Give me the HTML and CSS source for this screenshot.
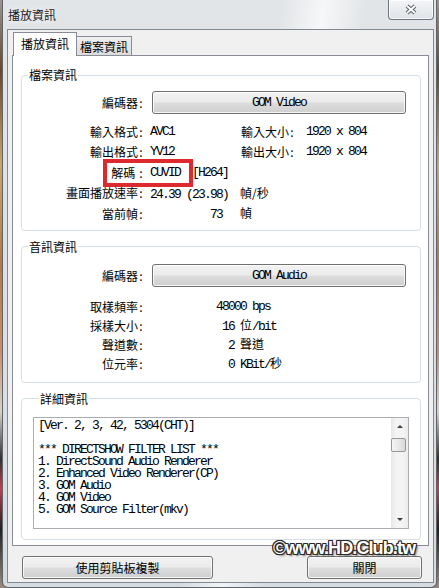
FILE: index.html
```html
<!DOCTYPE html>
<html lang="zh-Hant">
<head>
  <meta charset="UTF-8" />
  <title>播放資訊</title>
  <link rel="stylesheet" href="styles.css">
</head>
<body>
  <div class="window">
    <div class="titlebar">
      <span class="title">播放資訊</span>
      <div class="close-box">
        <svg width="14" height="11" viewBox="0 0 14 11">
          <path d="M3 2 L11 9 M11 2 L3 9" stroke="#5a5f66" stroke-width="4" fill="none"/>
          <path d="M3 2 L11 9 M11 2 L3 9" stroke="#ffffff" stroke-width="2" fill="none"/>
        </svg>
      </div>
    </div>

    <div class="client">
      <div class="tabs">
        <div class="tab active">播放資訊</div>
        <div class="tab">檔案資訊</div>
      </div>

      <div class="panel">
        <fieldset class="group video">
          <legend>檔案資訊</legend>
          <div class="codec-row">
            <span class="label">編碼器<span class="c">:</span></span>
            <button class="btn codec mono">GOM Video</button>
          </div>
          <div class="info">
            <span class="label">輸入格式<span class="c">:</span></span>
            <span class="val mono">AVC1</span>
            <span class="label2">輸入大小<span class="c">:</span></span>
            <span class="val2 mono">1920 x 804</span>

            <span class="label">輸出格式<span class="c">:</span></span>
            <span class="val mono">YV12</span>
            <span class="label2">輸出大小<span class="c">:</span></span>
            <span class="val2 mono">1920 x 804</span>

            <span class="label">解碼 <span class="c">:</span></span>
            <span class="val mono span3">CUVID  [H264]</span>

            <span class="label">畫面播放速率<span class="c">:</span></span>
            <span class="val mono span3">24.39 (23.98)  <span class="cjk">幀/秒</span></span>

            <span class="label">當前幀<span class="c">:</span></span>
            <span class="val mono span3">          73   <span class="cjk">幀</span></span>

            <div class="mark"></div>
          </div>
        </fieldset>

        <fieldset class="group audio">
          <legend>音訊資訊</legend>
          <div class="codec-row">
            <span class="label">編碼器<span class="c">:</span></span>
            <button class="btn codec mono">GOM Audio</button>
          </div>
          <div class="info info-audio">
            <span class="label">取樣頻率<span class="c">:</span></span>
            <span class="val mono">           48000 bps</span>

            <span class="label">採樣大小<span class="c">:</span></span>
            <span class="val mono">            16 <span class="cjk">位</span>/bit</span>

            <span class="label">聲道數<span class="c">:</span></span>
            <span class="val mono">             2 <span class="cjk">聲道</span></span>

            <span class="label">位元率<span class="c">:</span></span>
            <span class="val mono">             0 KBit/<span class="cjk">秒</span></span>
          </div>
        </fieldset>

        <fieldset class="group detail-group">
          <legend>詳細資訊</legend>
          <div class="detail">
<pre class="mono">[Ver. 2, 3, 42, 5304(CHT)]

*** DIRECTSHOW FILTER LIST ***
1. DirectSound Audio Renderer
2. Enhanced Video Renderer(CP)
3. GOM Audio
4. GOM Video
5. GOM Source Filter(mkv)</pre>
            <div class="sb">
              <div class="sb-btn"><span class="arrow up"></span></div>
              <div class="sb-track"><div class="thumb"></div></div>
              <div class="sb-btn"><span class="arrow down"></span></div>
            </div>
          </div>
        </fieldset>
      </div>

      <div class="footer">
        <button class="btn copy">使用剪貼板複製</button>
        <button class="btn close">關閉</button>
      </div>
    </div>
  </div>

  <div class="watermark">©www.HD.Club.tw</div>
</body>
</html>
```

FILE: styles.css
```css
body {
  margin: 0;
  width: 439px;
  height: 588px;
  overflow: hidden;
  font-family: "Noto Sans CJK TC", sans-serif;
  font-size: 12px;
  color: #000;
  background: linear-gradient(to bottom, #9a948e 0%, #6b4528 12%, #c9a66b 28%, #b07a48 45%, #c8906a 60%, #d8d0c8 70%, #303030 78%, #c04050 83%, #202020 90%, #9a8a80 100%);
}
.window {
  margin-left: 2px;
  width: 435px;
  height: 588px;
  box-sizing: border-box;
  display: flex;
  flex-direction: column;
  padding: 0 2px 4px 4px;
  border: 1px solid #5d646c;
  border-top: 0;
  border-radius: 0 0 6px 6px;
  background:
    linear-gradient(100deg, rgba(255,255,255,0) 52%, rgba(255,255,255,0.7) 60%, rgba(255,255,255,0) 68%),
    linear-gradient(to bottom, #e2e5e8, #d6dbe0);
}
.titlebar {
  height: 29px;
  display: flex;
  align-items: flex-start;
}
.title {
  margin: 6px 0 0 1px;
  line-height: 17px;
  color: #1a1a1a;
  text-shadow: 0 0 6px #fff;
}
.close-box {
  margin-left: auto;
  width: 46px;
  height: 20px;
  box-sizing: border-box;
  border: 1px solid #6d757e;
  border-top: 0;
  border-radius: 0 0 4px 4px;
  background: linear-gradient(to bottom, #f3f5f7, #dfe3e7);
  box-shadow: inset 0 0 0 1px rgba(255,255,255,0.7);
  display: flex;
  align-items: center;
  justify-content: center;
}
.client {
  flex: 1;
  display: flex;
  flex-direction: column;
  border: 1px solid #7f8a95;
  background: #f0f0f0;
}
.tabs {
  display: flex;
  align-items: flex-end;
  padding: 2px 0 0 5px;
}
.tab {
  box-sizing: border-box;
  border: 1px solid #898c95;
  border-bottom: 0;
  text-align: center;
}
.tab.active {
  position: relative;
  z-index: 1;
  width: 64px;
  height: 24px;
  line-height: 22px;
  margin-bottom: -1px;
  background: #fff;
}
.tab:not(.active) {
  width: 55px;
  height: 19px;
  line-height: 19px;
  border-left: 0;
  background: linear-gradient(to bottom, #f0f0f0, #dcdcdc);
}
.panel {
  flex: 1;
  margin: 0 4px;
  padding-top: 12px;
  border: 1px solid #898c95;
  background: #fff;
}
.group {
  margin: 0 7px 0 8px;
  padding: 9px 14px 6px 0;
  border: 1px solid #d5dfe5;
  border-radius: 4px;
  min-width: 0;
}
.group legend {
  margin-left: 6px;
  padding: 0 1px;
  line-height: 14px;
}
.audio {
  margin-top: 9px;
  padding-top: 10px;
  padding-bottom: 9px;
}
.detail-group {
  margin-top: 9px;
  padding: 11px 11px 10px 11px;
}
.mono {
  font-family: "Liberation Mono", "Noto Sans CJK TC", monospace;
  font-size: 13px;
  letter-spacing: -1.8px;
}
.cjk {
  font-family: "Noto Sans CJK TC", sans-serif;
  font-size: 12px;
  letter-spacing: 0;
}
.c {
  display: inline-block;
  width: 6px;
  text-align: center;
}
.codec-row {
  display: flex;
  align-items: center;
}
.codec-row .label {
  width: 122px;
  text-align: right;
}
.btn {
  height: 23px;
  box-sizing: border-box;
  padding: 0;
  border: 1px solid #707070;
  border-radius: 3px;
  background: linear-gradient(to bottom, #f2f2f2 0%, #ebebeb 48%, #dddddd 52%, #cfcfcf 100%);
  box-shadow: inset 0 0 0 1px rgba(255,255,255,0.8);
  font-size: 12px;
  color: #000;
}
.btn.mono {
  font-size: 13px;
}
.btn:not(.mono) {
  font-family: "Noto Sans CJK TC", sans-serif;
}
.codec {
  margin-left: 8px;
  width: 254px;
}
.info {
  position: relative;
  display: grid;
  grid-template-columns: 122px 96px 62px 1fr;
  grid-auto-rows: 20.5px;
  align-items: center;
  margin-top: 7px;
}
.info-audio {
  grid-template-columns: 122px 1fr;
  grid-auto-rows: 19px;
  margin-top: 10px;
}
.info .label {
  text-align: right;
}
.val {
  padding-left: 6px;
  white-space: pre;
}
.label2 {
  padding-left: 1px;
}
.val2 {
  padding-left: 4px;
  white-space: pre;
}
.span3 {
  grid-column: span 3;
}
.mark {
  position: absolute;
  left: 81px;
  top: 38px;
  width: 90px;
  height: 28px;
  box-sizing: border-box;
  border: 4px solid #dc2a2f;
}
.detail {
  display: flex;
  height: 112px;
  box-sizing: border-box;
  border: 1px solid #abadb3;
  background: #fff;
}
.detail pre {
  flex: 1;
  margin: 0;
  padding: 2px 4px 0;
  line-height: 12px;
}
.sb {
  width: 17px;
  display: flex;
  flex-direction: column;
  background: linear-gradient(to right, #e7e7e7, #f4f4f4 30%, #f4f4f4 70%, #ebebeb);
}
.sb-btn {
  height: 17px;
  display: flex;
  align-items: center;
  justify-content: center;
}
.arrow {
  width: 0;
  height: 0;
  border-left: 3px solid transparent;
  border-right: 3px solid transparent;
}
.arrow.up {
  border-bottom: 3px solid #3c3c3c;
}
.arrow.down {
  border-top: 3px solid #3c3c3c;
}
.sb-track {
  flex: 1;
  padding-top: 3px;
}
.thumb {
  height: 14px;
  margin: 0 2px 0 0;
  box-sizing: border-box;
  border: 1px solid #979797;
  border-radius: 2px;
  background: linear-gradient(to right, #f4f4f4, #e8e8e8 50%, #d8d8d8);
}
.footer {
  display: flex;
  justify-content: space-between;
  padding: 10px 11px 3px 14px;
}
.copy {
  width: 191px;
}
.close {
  width: 115px;
}
.watermark {
  position: absolute;
  left: 273px;
  top: 538px;
  font-family: "Liberation Sans", sans-serif;
  font-weight: bold;
  font-size: 18px;
  line-height: 21px;
  letter-spacing: -0.9px;
  color: #fff;
  text-shadow: 1px 1px 0 #2a2a2a, -1px -1px 0 #2a2a2a, 1px -1px 0 #2a2a2a, -1px 1px 0 #2a2a2a, 0 1px 0 #2a2a2a, 1px 0 0 #2a2a2a, 0 -1px 0 #2a2a2a, -1px 0 0 #2a2a2a, 2px 2px 2px rgba(0,0,0,0.5);
}
```
